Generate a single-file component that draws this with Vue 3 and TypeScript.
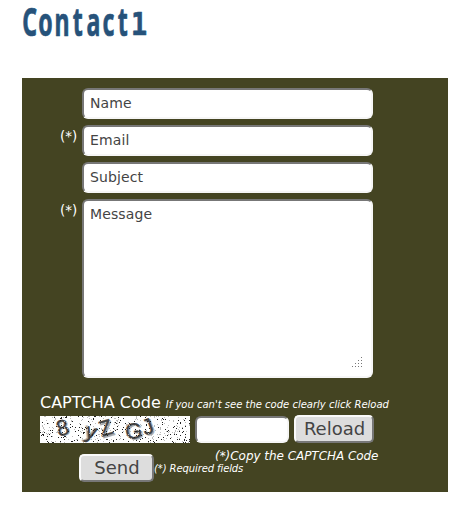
<script setup lang="ts">
import { ref } from 'vue'

interface Field {
  label: string
  required: boolean
}

const fields: Field[] = [
  { label: 'Name', required: false },
  { label: 'Email', required: true },
  { label: 'Subject', required: false },
]
const values = ref<string[]>(fields.map((f) => f.label))
const message = ref('Message')
const code = ref('')

// Seeded generator, so the speckles are the same on every load.
function speckles(count: number, start: number): string {
  let seed = start
  const next = (max: number): number => {
    seed = (seed * 16807) % 2147483647
    return Math.floor((seed / 2147483647) * max)
  }
  let d = ''
  for (let i = 0; i < count; i++) d += `M${next(150)} ${next(27)}h1v1h-1z`
  return d
}
const dark = speckles(210, 71317)
const light = speckles(260, 905411)
</script>

<template>
  <main class="page">
    <h1 class="title">
      <svg class="wordmark" width="140" height="50" viewBox="0 0 140 50">
        <text class="word" transform="scale(0.6 1)" y="35.5" x="0.5 27.2 54 84.5 107.5 134 159.5">Contact</text>
        <text class="digit" transform="scale(0.84 1)" y="35.5" x="129.8">1</text>
      </svg>
    </h1>
    <form class="panel" @submit.prevent>
      <div v-for="(field, i) in fields" :key="field.label" class="row">
        <span class="mark">{{ field.required ? '(*)' : '' }}</span>
        <input v-model="values[i]" class="box" type="text" />
      </div>
      <div class="row tall">
        <span class="mark">(*)</span>
        <div class="area">
          <textarea v-model="message" class="box message"></textarea>
          <svg class="grip" width="10" height="10" viewBox="0 0 10 10" shape-rendering="crispEdges">
            <path fill="#777" d="M9 0h1v1h-1zM6 3h1v1h-1zM9 3h1v1h-1zM3 6h1v1h-1zM6 6h1v1h-1zM9 6h1v1h-1zM0 9h1v1h-1zM3 9h1v1h-1zM6 9h1v1h-1zM9 9h1v1h-1z" />
          </svg>
        </div>
      </div>
      <div class="caption">
        <span class="heading">CAPTCHA Code</span>
        <em class="hint">If you can't see the code clearly click Reload</em>
      </div>
      <div class="captcha">
        <svg class="picture" width="150" height="27" viewBox="0 0 150 27">
          <rect width="150" height="27" fill="#fff" />
          <g class="glyphs shade">
            <text transform="translate(19.5 21) rotate(-15)">8</text>
            <text transform="translate(42.5 20.5) rotate(17)">y</text>
            <text transform="translate(63 22.5) rotate(-17)">Z</text>
            <text transform="translate(87.5 24.5) rotate(-7)">G</text>
            <text transform="translate(106.5 20.5) rotate(-20)">J</text>
          </g>
          <g class="glyphs">
            <text transform="translate(18.5 20.5) rotate(-15)">8</text>
            <text transform="translate(44 21) rotate(17)">y</text>
            <text transform="translate(61.5 21) rotate(-17)">Z</text>
            <text transform="translate(86 23.5) rotate(-7)">G</text>
            <text transform="translate(105 19.5) rotate(-20)">J</text>
          </g>
          <path :d="light" fill="#bbb" shape-rendering="crispEdges" />
          <path :d="dark" fill="#222" shape-rendering="crispEdges" />
        </svg>
        <input v-model="code" class="box code" type="text" />
        <button class="button reload" type="button">Reload</button>
      </div>
      <div class="footer">
        <button class="button send" type="submit">Send</button>
        <div class="notes">
          <em class="copy">(*)Copy the CAPTCHA Code</em>
          <em class="hint required">(*) Required fields</em>
        </div>
      </div>
    </form>
  </main>
</template>

<style>
body {
  background: #fff;
}
</style>

<style scoped>
.page {
  padding-left: 22px;
  font-family: 'DejaVu Sans', sans-serif;
}
.title {
  height: 78px;
  margin: 0;
}
.wordmark {
  display: block;
  overflow: visible;
  fill: #26527a;
  stroke: #26527a;
  stroke-width: 0.7px;
  stroke-linejoin: round;
}
.word {
  font: bold 38.5px 'Noto Sans', sans-serif;
}
.digit {
  font: bold 32px 'DejaVu Sans Mono', monospace;
}
.panel {
  box-sizing: border-box;
  width: 426px;
  height: 414px;
  padding-top: 10px;
  background: #444422;
  color: #fff;
}
.row {
  display: flex;
  height: 31px;
  margin-bottom: 6px;
}
.tall {
  height: 179px;
  margin-bottom: 15px;
}
.mark {
  flex: none;
  width: 22px;
  padding: 3px 0 0 38px;
  font-size: 13.4px;
  line-height: 17px;
  white-space: nowrap;
}
.box {
  display: block;
  box-sizing: border-box;
  width: 291px;
  height: 31px;
  margin: 0;
  padding: 0 6px 1px;
  border: 2px solid;
  border-color: #777 #f6f6f6 #f6f6f6 #777;
  border-radius: 6px;
  outline: none;
  background: #fff;
  color: #444;
  font: 14px 'DejaVu Sans', sans-serif;
  letter-spacing: 0.12px;
}
.area {
  position: relative;
}
.message {
  height: 179px;
  padding: 5px 6px;
  line-height: 17px;
  resize: none;
}
.grip {
  position: absolute;
  right: 11px;
  bottom: 11px;
}
.caption {
  display: flex;
  align-items: baseline;
  gap: 5px;
  height: 23px;
  padding-left: 18px;
  line-height: 20px;
}
.heading {
  font-size: 16px;
}
.hint {
  font-size: 10px;
  white-space: nowrap;
}
.captcha {
  display: flex;
  align-items: flex-start;
  height: 29px;
  padding-left: 18px;
}
.picture {
  flex: none;
}
.glyphs {
  fill: #444;
  stroke: #333;
  stroke-width: 0.3px;
  font: 22px 'Liberation Sans', sans-serif;
}
.shade {
  fill: #aaa;
  stroke: #999;
}
.code {
  width: 94px;
  height: 27px;
  margin-left: 5px;
}
.button {
  flex: none;
  box-sizing: border-box;
  height: 28px;
  margin: 0;
  padding: 0 0 0 1px;
  border: 2px solid;
  border-color: #fafafa #777 #777 #fafafa;
  border-radius: 5px;
  background: #ddd;
  color: #444;
  font: 18px/22px 'DejaVu Sans', sans-serif;
}
.reload {
  width: 80px;
  margin: -1px 0 0 5px;
}
.send {
  width: 75px;
  margin-top: 9px;
}
.footer {
  display: flex;
  padding-left: 57px;
}
.notes {
  display: flex;
  flex-direction: column;
  padding-top: 4px;
}
.copy {
  padding-left: 61px;
  font-size: 12px;
  line-height: 14px;
  letter-spacing: -0.04px;
  white-space: nowrap;
}
.required {
  line-height: 12px;
  letter-spacing: -0.1px;
}
</style>
